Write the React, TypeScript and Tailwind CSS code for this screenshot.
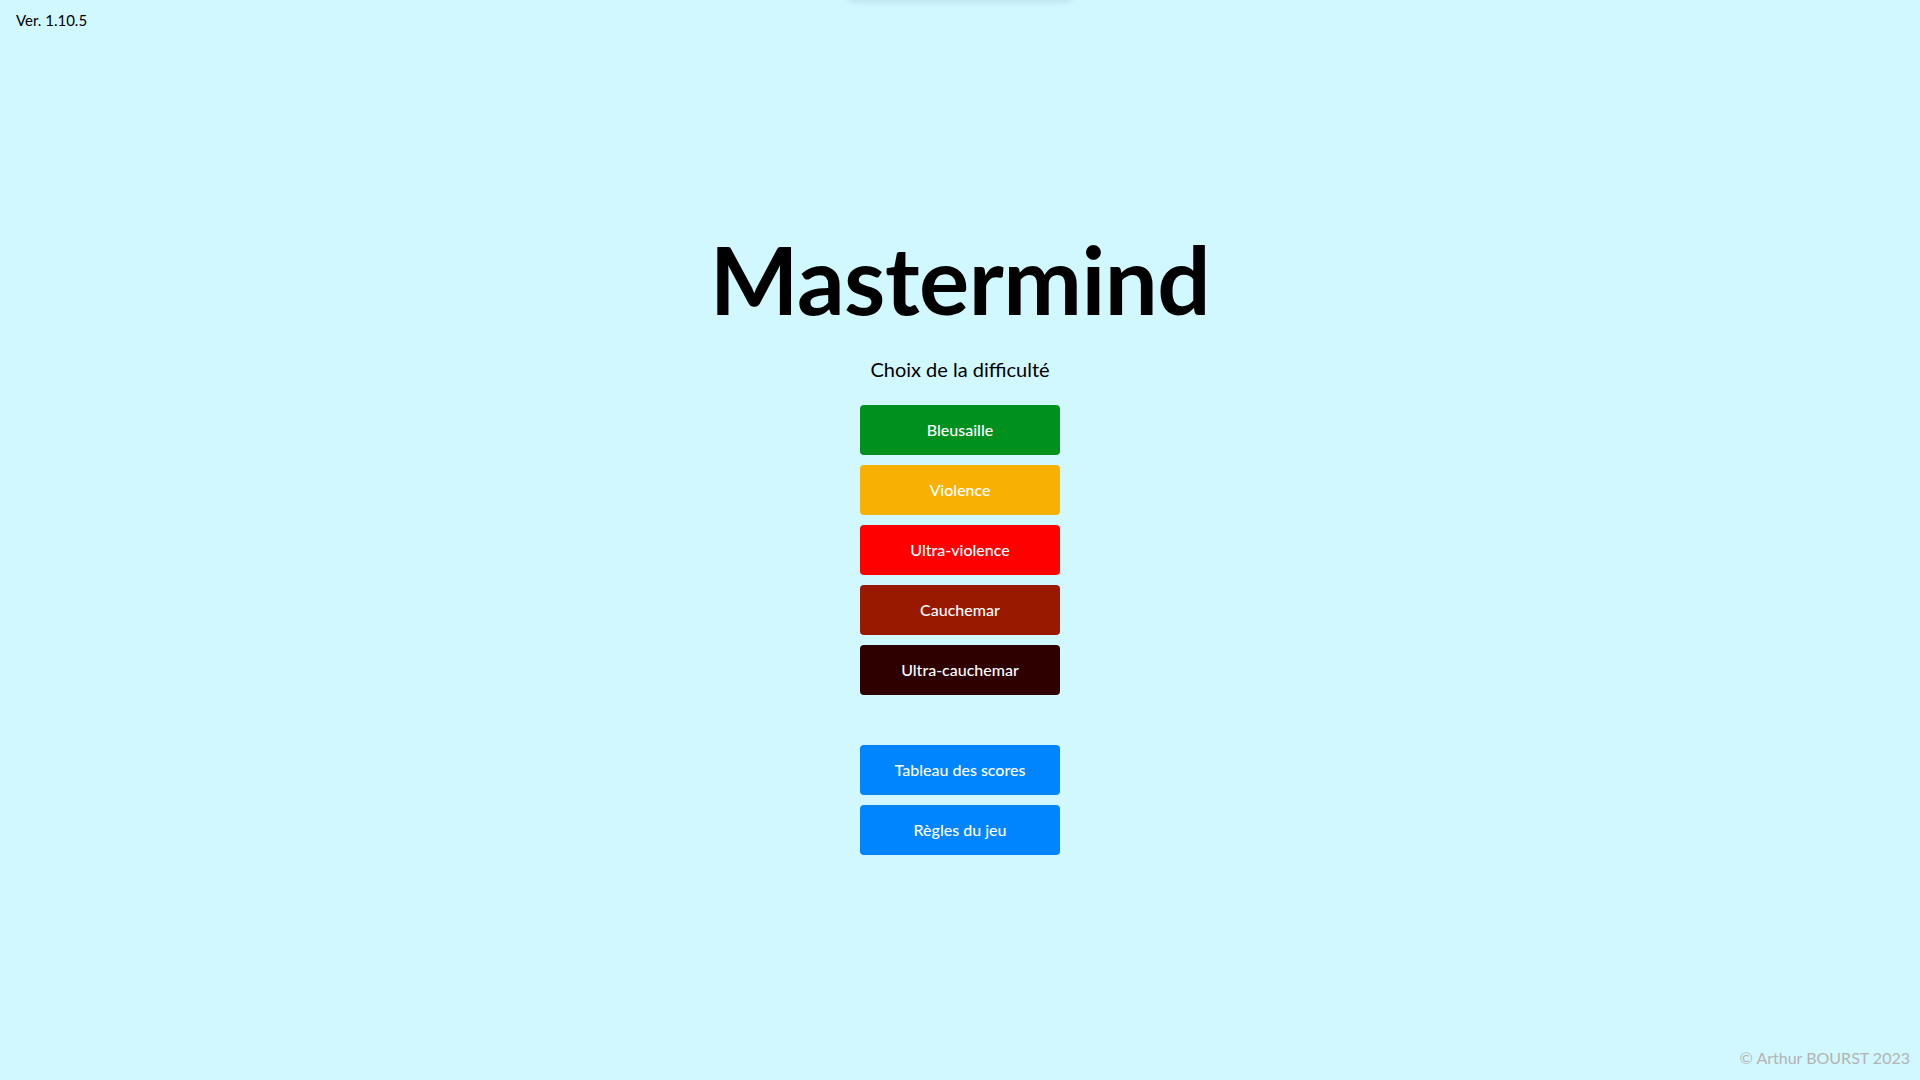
import React from "react";

const difficulties = [
  { label: "Bleusaille", cls: "bg-[#00901e]" },
  { label: "Violence", cls: "bg-[#f8b003]" },
  { label: "Ultra-violence", cls: "bg-[#ff0000]" },
  { label: "Cauchemar", cls: "bg-[#991800]" },
  { label: "Ultra-cauchemar", cls: "bg-[#2e0000]" },
];

export default function App() {
  return (
    <div
      className="relative min-h-screen w-full overflow-hidden bg-[#d1f7ff] text-black flex flex-col"
      style={{ fontFamily: "Lato, 'Noto Sans', sans-serif" }}
    >
      <div className="absolute left-1/2 -translate-x-1/2 top-[-56px] w-[224px] h-[56px] rounded-md bg-[#d1f7ff] shadow-[0_2px_6px_rgba(0,80,100,0.12)]" />
      <div className="pt-[10px] pl-4 text-[15px] leading-5">Ver. 1.10.5</div>
      <main className="flex flex-col items-center flex-1">
        <h1 className="mt-[202px] text-[94px] leading-none font-bold tracking-[-0.5px]">Mastermind</h1>
        <p className="mt-[29px] text-[20px] leading-7">Choix de la difficulté</p>
        <div className="mt-[22px] flex flex-col gap-[10px]">
          {difficulties.map((d) => (
            <button
              key={d.label}
              className={`w-[200px] h-[50px] rounded-[4px] text-white text-[16px] font-medium ${d.cls}`}
            >
              {d.label}
            </button>
          ))}
        </div>
        <div className="mt-[50px] flex flex-col gap-[10px]">
          <button className="w-[200px] h-[50px] rounded-[4px] text-white text-[16px] font-medium bg-[#0085ff]">
            Tableau des scores
          </button>
          <button className="w-[200px] h-[50px] rounded-[4px] text-white text-[16px] font-medium bg-[#0085ff]">
            Règles du jeu
          </button>
        </div>
      </main>
      <footer className="flex justify-end pr-[10px] pb-[10px] text-[16px] leading-6 text-[#b3b3b3]">
        © Arthur BOURST 2023
      </footer>
    </div>
  );
}
